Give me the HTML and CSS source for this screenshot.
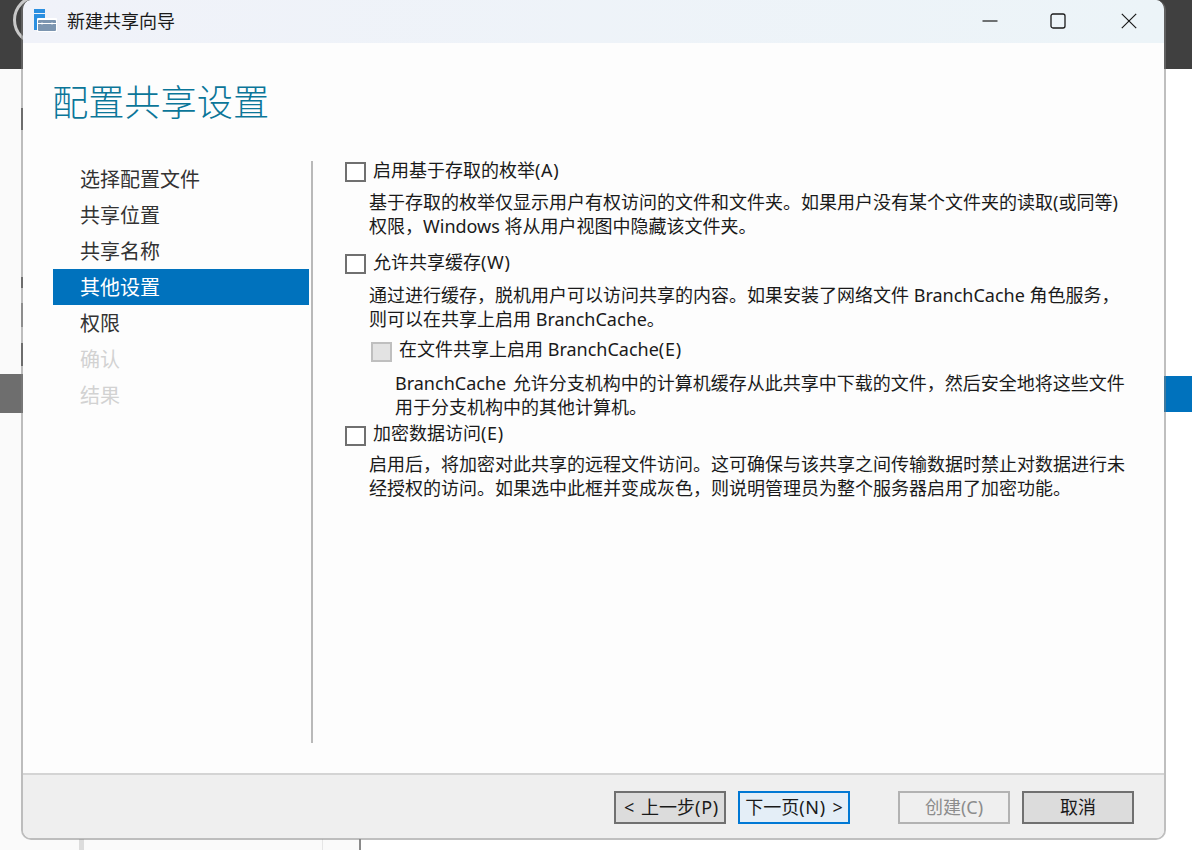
FILE: index.html
```html
<!DOCTYPE html>
<html lang="zh-CN">
<head>
<meta charset="utf-8">
<title>新建共享向导</title>
<link rel="stylesheet" href="styles.css">
</head>
<body>
<div class="desktop">
  <div class="bg-top"></div>
  <div class="bg-right"></div>
  <div class="bg-band-left"></div>
  <div class="bg-band-right"></div>
  <div class="bg-line bg-line-a"></div>
  <div class="bg-line bg-line-c"></div>
  <div class="bg-line bg-line-b"></div>
  <div class="bg-mark bg-mark-a"></div>
  <div class="bg-mark bg-mark-b"></div>
  <div class="bg-mark bg-mark-c"></div>
  <div class="bg-mark bg-mark-d"></div>
  <div class="bg-ring"></div>
  <div class="window">
    <header class="titlebar">
      <svg class="app-icon" width="24" height="24" viewBox="0 0 24 24">
        <rect x="1" y="1" width="11" height="4" fill="#2b8fe0"/>
        <rect x="1" y="6" width="11" height="16" fill="#2b8fe0"/>
        <rect x="4" y="10" width="20" height="14" rx="1" fill="#fff"/>
        <rect x="5" y="12" width="18" height="11" rx="1" fill="#7c95b0"/>
        <path d="M9 12v-1.500h10V12M5 15.500h18M9 14.500v2M19 14.500v2" stroke="#fff" fill="none"/>
      </svg>
      <span class="title">新建共享向导</span>
      <div class="controls">
        <svg class="ctl ctl-min" width="16" height="16" viewBox="0 0 16 16"><path d="M.5 8h15" stroke="#1a1a1a" stroke-width="1.200" fill="none"/></svg>
        <svg class="ctl" width="16" height="16" viewBox="0 0 16 16"><rect x="1" y="1" width="14" height="14" rx="2" stroke="#1a1a1a" stroke-width="1.300" fill="none"/></svg>
        <svg class="ctl" width="16" height="16" viewBox="0 0 16 16"><path d="M.8.800l14.400 14.400M15.200.800L.8 15.200" stroke="#1a1a1a" stroke-width="1.200" fill="none"/></svg>
      </div>
    </header>
    <main class="body">
      <h1 class="heading">配置共享设置</h1>
      <div class="columns">
        <nav class="steps">
          <div class="step">选择配置文件</div>
          <div class="step">共享位置</div>
          <div class="step">共享名称</div>
          <div class="step active">其他设置</div>
          <div class="step">权限</div>
          <div class="step off">确认</div>
          <div class="step off">结果</div>
        </nav>
        <section class="options">
          <label class="opt"><span class="box"></span><span class="lbl">启用基于存取的枚举<span class="key">(A)</span></span></label>
          <p class="desc d1">基于存取的枚举仅显示用户有权访问的文件和文件夹。如果用户没有某个文件夹的读取(或同等)<br>权限，Windows 将从用户视图中隐藏该文件夹。</p>
          <label class="opt o2"><span class="box"></span><span class="lbl">允许共享缓存<span class="key">(W)</span></span></label>
          <p class="desc d2">通过进行缓存，脱机用户可以访问共享的内容。如果安装了网络文件 BranchCache 角色服务，<br>则可以在共享上启用 BranchCache。</p>
          <label class="opt sub"><span class="box dis"></span><span class="lbl">在文件共享上启用 BranchCache<span class="key">(E)</span></span></label>
          <p class="desc subdesc">BranchCache 允许分支机构中的计算机缓存从此共享中下载的文件，然后安全地将这些文件<br>用于分支机构中的其他计算机。</p>
          <label class="opt o3"><span class="box"></span><span class="lbl">加密数据访问<span class="key">(E)</span></span></label>
          <p class="desc d3">启用后，将加密对此共享的远程文件访问。这可确保与该共享之间传输数据时禁止对数据进行未<br>经授权的访问。如果选中此框并变成灰色，则说明管理员为整个服务器启用了加密功能。</p>
        </section>
      </div>
    </main>
    <footer class="footer">
      <button class="btn back">&lt; 上一步<span class="key">(P)</span></button>
      <button class="btn primary">下一页<span class="key">(N)</span> &gt;</button>
      <button class="btn disabled">创建(C)</button>
      <button class="btn">取消</button>
    </footer>
  </div>
</div>
</body>
</html>
```

FILE: styles.css
```css
* { box-sizing: border-box; }
html, body { margin: 0; padding: 0; }
body {
  font-family: "Noto Sans", "Noto Sans CJK SC", sans-serif;
  font-size: 18px;
  color: #1a1a1a;
  overflow: hidden;
}
.desktop { position: relative; width: 1192px; height: 850px; background: #fafafa; overflow: hidden; }
.bg-top { position: absolute; left: 0; top: 0; width: 1192px; height: 69px; background: #404040; }
.bg-right { position: absolute; left: 360px; top: 69px; width: 832px; height: 781px; background: #fff; }
.bg-band-left { position: absolute; left: 0; top: 374px; width: 30px; height: 39px; background: #6e6e6e; }
.bg-band-right { position: absolute; left: 1160px; top: 376px; width: 32px; height: 36px; background: #0072bd; }
.bg-line { position: absolute; top: 839px; height: 11px; }
.bg-line-a { left: 79px; width: 5px; background: #dcdcdc; }
.bg-line-c { left: 322px; width: 1px; background: #e6e6e6; }
.bg-line-b { left: 359px; width: 2px; background: #8a8a8a; }
.bg-mark { position: absolute; left: 21px; width: 2px; background: #5a5a5a; }
.bg-mark-a { top: 108px; height: 22px; }
.bg-mark-b { top: 277px; height: 11px; }
.bg-mark-c { top: 303px; height: 24px; background: #9a9a9a; }
.bg-mark-d { top: 343px; height: 23px; }
.bg-ring { position: absolute; left: 13px; top: -5px; width: 50px; height: 50px; border: 3px solid #c8c8c8; border-radius: 50%; }

.window {
  position: absolute; left: 21px; top: 0; width: 1145px; height: 840px;
  background: #fdfdfd; background-clip: padding-box;
  border: 2px solid rgba(128, 128, 128, 0.5); border-top: 0;
  border-radius: 10px; overflow: hidden;
  display: flex; flex-direction: column;
}
.titlebar {
  height: 43px; flex: none; display: flex; align-items: center;
  background: linear-gradient(90deg, #f0f2f9, #ecf4f8);
  padding-left: 10px;
}
.app-icon { flex: none; margin-top: -3px; }
.title { margin-left: 10px; font-size: 18px; line-height: 24px; margin-top: -1px; color: #1a1a1a; }
.controls { margin-left: auto; display: flex; gap: 55px; padding-right: 27px; margin-top: -1px; }
.ctl { display: block; }
.ctl-min { margin-right: -3px; }

.body { flex: 1; padding: 0 0 0 30px; min-height: 0; display: flex; flex-direction: column; background: #fdfdfd; }
.heading { margin: 35px 0 0 -1px; font-size: 36.2px; font-weight: 300; line-height: 48px; color: #0b7699; }
.columns { display: flex; margin-top: 35px; flex: 1; min-height: 0; padding-bottom: 30px; }
.steps { width: 258px; flex: none; }
.step { height: 36px; width: 256px; padding-left: 27px; font-size: 20px; line-height: 38px; color: #333; }
.step.active { background: #0072bd; color: #fff; }
.step.off { color: #d2d2d2; }
.options { flex: 1; border-left: 2px solid #b9b9b9; padding-left: 32px; }
.opt { display: flex; align-items: center; height: 22px; font-size: 18px; line-height: 22px; }
.box { width: 21px; height: 20px; border: 2px solid #707070; background: #fff; flex: none; margin-right: 7px; }
.box.dis { background: #e3e3e3; border-color: #bfbfbf; }
.lbl { padding-bottom: 4px; }
.key { letter-spacing: 0.7px; }
.desc { margin: 0; font-size: 18px; line-height: 24px; color: #1a1a1a; white-space: nowrap; margin-left: 24px; }
.d1 { margin-top: 7px; }
.o2 { margin-top: 15px; }
.d2 { margin-top: 8px; }
.sub { margin-left: 26px; margin-top: 10px; }
.sub .lbl { padding-bottom: 6px; }
.subdesc { margin-left: 50px; margin-top: 8px; word-spacing: 2px; }
.o3 { margin-top: 6px; }
.o3 .lbl { padding-bottom: 6px; }
.d3 { margin-top: 5px; }

.footer {
  height: 65px; flex: none; background: #efefef; border-top: 2px solid #d4d4d4;
  display: flex; align-items: flex-start; padding: 16px 0 0 591px;
}
.btn {
  width: 112px; height: 33px; padding: 0; font: inherit; font-size: 18px; line-height: 27px;
  background: #dcdcdc; color: #1a1a1a; border: 2px solid #707070; border-radius: 0; margin-right: 12px;
}
.btn.back { padding-left: 3px; word-spacing: 2px; }
.btn.primary { background: #e4eef7; border-color: #0078d4; margin-right: 48px; word-spacing: 2px; }
.btn.disabled { background: #efefef; border-color: #b2b2b2; color: #8c8c8c; }
```
